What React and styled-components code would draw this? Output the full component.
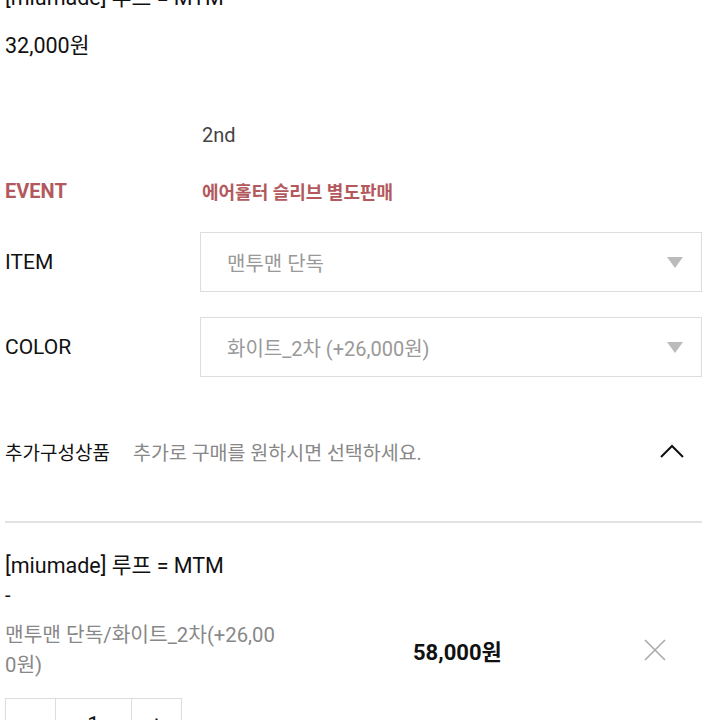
import React from "react";
import styled, { createGlobalStyle } from "styled-components";

const GlobalStyle = createGlobalStyle`
  html, body {
    margin: 0;
    padding: 0;
    background: #fff;
  }
  body {
    font-family: Roboto, "Noto Sans CJK KR", sans-serif;
    color: #111;
    overflow: hidden;
  }
`;

const Page = styled.div`
  width: 697px;
  padding-left: 5px;
  margin-top: -16px;
`;

const Title = styled.div`
  font-size: 21.5px;
  line-height: 28px;
  color: #111;
`;

const Price = styled.div`
  font-size: 21.5px;
  line-height: 28px;
  margin-top: 20px;
`;

const Options = styled.div`
  margin-top: 60px;
  display: grid;
  grid-template-columns: 195px 1fr;
  align-items: center;
`;

const Label = styled.div`
  font-size: ${(p) => (p.$accent ? 20 : 21)}px;
  color: ${(p) => (p.$accent ? "#b3595e" : "#111")};
  font-weight: ${(p) => (p.$accent ? 700 : 400)};
`;

const Value = styled.div`
  font-size: ${(p) => (p.$accent ? 18 : 20)}px;
  color: ${(p) => (p.$accent ? "#b3595e" : "#444")};
  font-weight: ${(p) => (p.$accent ? 700 : 400)};
  padding-left: 2px;
`;

const Row = styled.div`
  display: contents;
`;

const Cell = styled.div`
  height: ${(p) => p.$h}px;
  display: flex;
  align-items: center;
`;

const Select = styled.div`
  height: 58px;
  border: 1px solid #ddd;
  display: flex;
  align-items: center;
  justify-content: space-between;
  padding: 0 18px 0 26px;
  font-size: 20px;
  color: #999;
`;

const Triangle = styled.span`
  width: 0;
  height: 0;
  border-left: 8px solid transparent;
  border-right: 8px solid transparent;
  border-top: 11px solid #bbb;
`;

const Extra = styled.div`
  display: flex;
  align-items: center;
  height: 40px;
  margin-top: 54px;
  padding-right: 18px;
`;

const ExtraLabel = styled.span`
  font-size: 19px;
  color: #111;
  width: 128px;
`;

const ExtraHint = styled.span`
  flex: 1;
  font-size: 19.5px;
  color: #888;
`;

const Divider = styled.hr`
  border: none;
  border-top: 2px solid #e2e2e2;
  margin: 50px 0 0;
`;

const Cart = styled.div`
  margin-top: 29px;
`;

const Dash = styled.div`
  font-size: 20px;
  line-height: 30px;
  margin-bottom: 10px;
`;

const CartRow = styled.div`
  display: grid;
  grid-template-columns: 408px 1fr auto;
  align-items: center;
  padding-right: 36px;
`;

const CartOption = styled.div`
  font-size: 20.3px;
  line-height: 30px;
  color: #888;
  width: 278px;
  word-break: break-all;
`;

const CartPrice = styled.div`
  font-size: 22px;
  font-weight: 700;
  color: #111;
`;

const Qty = styled.div`
  margin-top: 18px;
  display: flex;
  height: 50px;
  border: 1px solid #ddd;
  width: fit-content;
`;

const QtyCell = styled.div`
  width: ${(p) => p.$w}px;
  border-right: ${(p) => (p.$last ? "none" : "1px solid #ddd")};
  display: flex;
  align-items: center;
  justify-content: center;
  font-size: 22px;
`;

export default function App() {
  return (
    <>
      <GlobalStyle />
      <Page>
        <Title>[miumade] 루프 = MTM</Title>
        <Price>32,000원</Price>
        <Options>
          <Row>
            <Cell $h={30} />
            <Cell $h={30}>
              <Value>2nd</Value>
            </Cell>
          </Row>
          <Row>
            <Cell $h={82}>
              <Label $accent>EVENT</Label>
            </Cell>
            <Cell $h={82}>
              <Value $accent>에어홀터 슬리브 별도판매</Value>
            </Cell>
          </Row>
          <Row>
            <Cell $h={60}>
              <Label>ITEM</Label>
            </Cell>
            <Select>
              맨투맨 단독
              <Triangle />
            </Select>
          </Row>
          <Row>
            <Cell $h={25} />
            <Cell $h={25} />
          </Row>
          <Row>
            <Cell $h={60}>
              <Label>COLOR</Label>
            </Cell>
            <Select>
              화이트_2차 (+26,000원)
              <Triangle />
            </Select>
          </Row>
        </Options>
        <Extra>
          <ExtraLabel>추가구성상품</ExtraLabel>
          <ExtraHint>추가로 구매를 원하시면 선택하세요.</ExtraHint>
          <svg width="24" height="14" viewBox="0 0 24 14" fill="none">
            <path d="M1 13 L12 2 L23 13" stroke="#111" strokeWidth="2" />
          </svg>
        </Extra>
        <Divider />
        <Cart>
          <Title>[miumade] 루프 = MTM</Title>
          <Dash>-</Dash>
          <CartRow>
            <CartOption>맨투맨 단독/화이트_2차(+26,000원)</CartOption>
            <CartPrice>58,000원</CartPrice>
            <svg width="22" height="22" viewBox="0 0 22 22" fill="none">
              <path d="M1 1 L21 21 M21 1 L1 21" stroke="#aaa" strokeWidth="1.6" />
            </svg>
          </CartRow>
          <Qty>
            <QtyCell $w={49}>-</QtyCell>
            <QtyCell $w={75}>1</QtyCell>
            <QtyCell $w={49} $last>+</QtyCell>
          </Qty>
        </Cart>
      </Page>
    </>
  );
}
